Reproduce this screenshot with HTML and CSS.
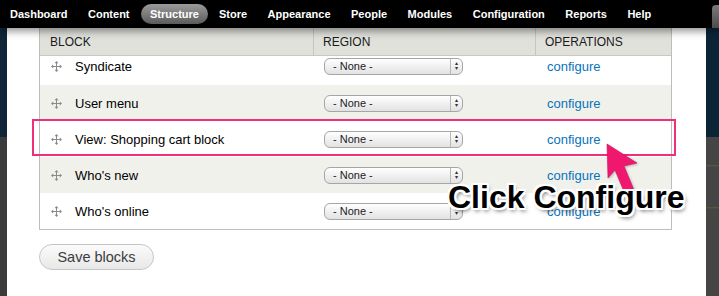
FILE: index.html
```html
<!DOCTYPE html>
<html lang="en">
<head>
    <meta charset="UTF-8">
    <title>Block layout</title>
    <link rel="stylesheet" href="styles.css">
</head>
<body>
    <div class="toolbar">
        <nav class="menu">
            <a href="#">Dashboard</a>
            <a href="#">Content</a>
            <a href="#" class="active">Structure</a>
            <a href="#">Store</a>
            <a href="#">Appearance</a>
            <a href="#">People</a>
            <a href="#">Modules</a>
            <a href="#">Configuration</a>
            <a href="#">Reports</a>
            <a href="#">Help</a>
        </nav>
        <span class="shortcut-tab"></span>
    </div>

    <div class="frame">
        <div class="edge edge-left"></div>

        <main class="page">
            <div class="blocks">
                <div class="blocks-head">
                    <div class="cell">BLOCK</div>
                    <div class="cell">REGION</div>
                    <div class="cell">OPERATIONS</div>
                </div>

                <div class="block-row partial">
                    <div class="cell name"><svg class="handle" viewBox="0 0 11 11"><use href="#move"/></svg>Syndicate</div>
                    <div class="cell region"><span class="picker"><span class="picker-value">- None -</span><span class="picker-arrows">&#9652;<br>&#9662;</span></span></div>
                    <div class="cell ops"><a href="#">configure</a></div>
                </div>
                <div class="block-row even">
                    <div class="cell name"><svg class="handle" viewBox="0 0 11 11"><use href="#move"/></svg>User menu</div>
                    <div class="cell region"><span class="picker"><span class="picker-value">- None -</span><span class="picker-arrows">&#9652;<br>&#9662;</span></span></div>
                    <div class="cell ops"><a href="#">configure</a></div>
                </div>
                <div class="block-row">
                    <div class="cell name"><svg class="handle" viewBox="0 0 11 11"><use href="#move"/></svg>View: Shopping cart block</div>
                    <div class="cell region"><span class="picker"><span class="picker-value">- None -</span><span class="picker-arrows">&#9652;<br>&#9662;</span></span></div>
                    <div class="cell ops"><a href="#">configure</a></div>
                </div>
                <div class="block-row even">
                    <div class="cell name"><svg class="handle" viewBox="0 0 11 11"><use href="#move"/></svg>Who's new</div>
                    <div class="cell region"><span class="picker"><span class="picker-value">- None -</span><span class="picker-arrows">&#9652;<br>&#9662;</span></span></div>
                    <div class="cell ops"><a href="#">configure</a></div>
                </div>
                <div class="block-row">
                    <div class="cell name"><svg class="handle" viewBox="0 0 11 11"><use href="#move"/></svg>Who's online</div>
                    <div class="cell region"><span class="picker"><span class="picker-value">- None -</span><span class="picker-arrows">&#9652;<br>&#9662;</span></span></div>
                    <div class="cell ops"><a href="#">configure</a></div>
                </div>
            </div>

            <button type="button" class="save">Save blocks</button>

            <!-- annotation layer -->
            <div class="highlight"></div>
            <svg class="pointer" width="44" height="60" viewBox="0 0 44 60">
                <polygon points="2,2 32,21 19,24 29,48 20,52 10,28 3,36" fill="#f0176f" stroke="#d0105e" stroke-width="0.6"/>
            </svg>
            <div class="callout">Click Configure</div>
        </main>

        <div class="edge edge-right"></div>
    </div>

    <svg width="0" height="0" class="defs">
        <defs>
            <g id="move" fill="#8a8a8a" stroke="#8a8a8a">
                <path d="M5.5 1.5v8M1.5 5.5h8" stroke-width="1" fill="none"/>
                <path d="M5.5 0l2 2.2h-4zM5.5 11l2-2.2h-4zM0 5.5l2.2-2v4zM11 5.5l-2.2-2v4z" stroke="none"/>
            </g>
        </defs>
    </svg>
</body>
</html>
```

FILE: styles.css
```css
body {
    margin: 0;
    width: 719px;
    height: 296px;
    overflow: hidden;
    font-family: "Liberation Sans", Arial, sans-serif;
    background: #fff;
}
.defs {
    position: absolute;
}
.toolbar {
    position: relative;
    z-index: 2;
    height: 28px;
    background: #000;
    box-shadow: 0 3px 8px rgba(0, 0, 0, 0.45);
    display: flex;
    align-items: center;
}
.menu {
    display: flex;
    align-items: center;
    padding-left: 0;
}
.menu a {
    color: #fff;
    text-decoration: none;
    font-size: 11px;
    font-weight: bold;
    padding: 4px 10.5px 4px 10px;
    line-height: 12px;
    border-radius: 10px;
}
.menu a.active {
    background: linear-gradient(#9a9a9a, #5c5c5c);
    padding: 4px 9px;
    margin: 0 1px;
}
.shortcut-tab {
    position: absolute;
    right: -6px;
    top: 5px;
    width: 13px;
    height: 23px;
    border-radius: 4px 4px 0 0;
    background: linear-gradient(#7a7a7a, #4c4c4c);
}
.frame {
    display: flex;
    height: 268px;
}
.edge {
    flex: none;
}
.edge-left {
    width: 7px;
    background: linear-gradient(#0e2638 0, #0e2638 109px, #3b3b3b 109px);
}
.edge-right {
    width: 13px;
    background: linear-gradient(#0b2537 0, #0b2537 109px, #454545 109px, #454545 137px, #5a5e3c 137px, #454545 139px, #454545 179px, #5a5e3c 179px, #454545 181px);
}
.page {
    position: relative;
    flex: 1;
    background: #fff;
    padding: 0 34px 0 32px;
}
.blocks {
    border: 1px solid #bdbdbd;
    border-top: 0;
    font-size: 13px;
    color: #000;
}
.blocks-head, .block-row {
    display: grid;
    grid-template-columns: 273px 222px 1fr;
}
.blocks-head {
    height: 27px;
    background: #e1e1dc;
    border-bottom: 1px solid #c9c9c4;
    font-size: 12px;
    color: #1a1a1a;
    align-items: center;
}
.blocks-head .cell {
    padding-left: 10px;
    height: 100%;
    display: flex;
    align-items: center;
    padding-top: 1px;
    box-sizing: border-box;
}
.blocks-head .cell + .cell {
    border-left: 1px solid #c6c6c0;
    padding-left: 9px;
}
.block-row {
    height: 36px;
    align-items: center;
    background: #fff;
}
.block-row.even {
    background: #f1f1ec;
}
.block-row.partial {
    height: 28px;
    align-items: start;
    padding-top: 1px;
}
.block-row.partial .cell {
    height: 17px;
    margin-top: 1px;
}
.cell {
    display: flex;
    align-items: center;
}
.name {
    padding-left: 11px;
}
.handle {
    width: 11px;
    height: 11px;
    margin-right: 13px;
}
.region {
    padding-left: 11px;
}
.ops {
    padding-left: 12px;
}
.ops a {
    color: #0a73bb;
    text-decoration: none;
}
.picker {
    display: flex;
    width: 139px;
    height: 17px;
    box-sizing: border-box;
    border: 1px solid #a6a6a6;
    border-radius: 6px;
    background: linear-gradient(#ffffff, #f2f2f2 45%, #e2e2e2);
    font-size: 11px;
    color: #222;
}
.picker-value {
    flex: 1;
    padding-left: 8px;
    line-height: 15px;
}
.picker-arrows {
    width: 12px;
    border-left: 1px solid #b8b8b8;
    font-size: 6px;
    line-height: 5px;
    text-align: center;
    color: #333;
    padding-top: 2px;
    box-sizing: border-box;
}
.save {
    margin-top: 14px;
    width: 115px;
    height: 26px;
    border: 1px solid #c6c6c6;
    border-radius: 13px;
    background: linear-gradient(#fbfbfb, #e8e8e8);
    font-family: "Liberation Sans", Arial, sans-serif;
    font-size: 14.5px;
    color: #3c3c3c;
    padding: 0;
}
.highlight {
    position: absolute;
    left: 25px;
    top: 91px;
    width: 644px;
    height: 37px;
    box-sizing: border-box;
    border: 2px solid #ef2f78;
}
.pointer {
    position: absolute;
    left: 598px;
    top: 114px;
    filter: drop-shadow(1px 1px 1px rgba(0, 0, 0, 0.25));
}
.callout {
    position: absolute;
    left: 441px;
    top: 153px;
    font-size: 32px;
    line-height: 32px;
    font-weight: bold;
    color: #000;
    white-space: nowrap;
    text-shadow:
        -2px 0 0 #fff, 2px 0 0 #fff, 0 -2px 0 #fff, 0 2px 0 #fff,
        -2px -2px 0 #fff, 2px -2px 0 #fff, -2px 2px 0 #fff, 2px 2px 0 #fff,
        2px 3px 4px rgba(0, 0, 0, 0.6);
}
```
